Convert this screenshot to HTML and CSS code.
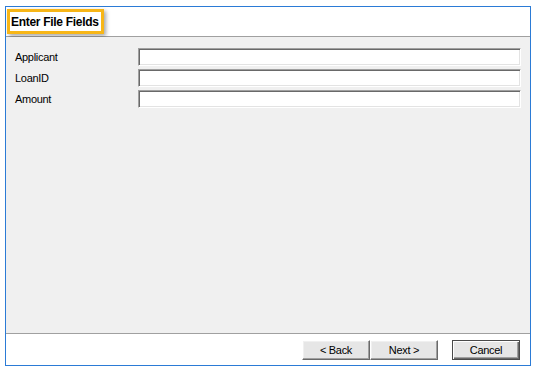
FILE: index.html
```html
<!DOCTYPE html>
<html>
<head>
<meta charset="utf-8">
<link rel="stylesheet" href="styles.css">
</head>
<body>
<div class="window">
  <div class="header">
    <div class="title">Enter File Fields</div>
  </div>
  <div class="content">
    <div class="fields">
      <label class="label">Applicant</label>
      <div class="textbox"></div>
      <label class="label">LoanID</label>
      <div class="textbox"></div>
      <label class="label">Amount</label>
      <div class="textbox"></div>
    </div>
  </div>
  <div class="footer">
    <div class="btn">&lt; Back</div>
    <div class="btn">Next &gt;</div>
    <div class="btn btn-default">Cancel</div>
  </div>
</div>
</body>
</html>
```
FILE: styles.css
```css
html, body {
  margin: 0;
  padding: 0;
  background: #ffffff;
}
body {
  font-family: "Liberation Sans", Arial, sans-serif;
  font-size: 11px;
  color: #000;
}
.window {
  margin: 6px 0 0 5px;
  width: 524px;
  height: 358px;
  border: 1px solid #2b7bd6;
  display: flex;
  flex-direction: column;
  background: #fff;
}
.header {
  height: 30px;
  box-sizing: border-box;
  padding: 2px 0 0 1px;
  border-bottom: 1px solid #a0a0a0;
  background: #fff;
}
.title {
  display: inline-block;
  border: 3px solid #f7b617;
  padding: 0 2px 0 1px;
  height: 19px;
  line-height: 20px;
  font-size: 12px;
  font-weight: bold;
  letter-spacing: -0.3px;
  box-shadow: 2px 2px 4px rgba(0, 0, 0, 0.35);
  background: #fff;
}
.content {
  flex: 1;
  background: #f0f0f0;
  padding: 11px 9px 0 9px;
  border-bottom: 1px solid #a0a0a0;
}
.fields {
  display: grid;
  grid-template-columns: 123px 1fr;
  grid-auto-rows: 18px;
  row-gap: 3px;
}
.label {
  line-height: 18px;
  letter-spacing: -0.3px;
  padding-top: 0px;
}
.textbox {
  box-sizing: border-box;
  height: 18px;
  background: #fff;
  border: 1px solid;
  border-color: #a0a0a0 #ffffff #ffffff #a0a0a0;
  box-shadow: inset 1px 1px 0 #696969, inset -1px -1px 0 #e3e3e3;
  margin-right: 0;
}
.footer {
  height: 31px;
  box-sizing: border-box;
  background: #fff;
  display: flex;
  justify-content: flex-end;
  padding: 6px 10px 0 0;
}
.btn {
  box-sizing: border-box;
  width: 68px;
  height: 20px;
  line-height: 18px;
  text-align: center;
  background: #e6e6e6;
  border: 1px solid;
  border-color: #ffffff #696969 #696969 #ffffff;
  box-shadow: inset -1px -1px 0 #a0a0a0, inset 1px 1px 0 #f0f0f0;
  letter-spacing: -0.3px;
}
.btn-default {
  margin-left: 14px;
  border: 1px solid #4a4a4a;
  box-shadow: inset 1px 1px 0 #ffffff, inset -1px -1px 0 #696969, inset -2px -2px 0 #a0a0a0;
}
```
